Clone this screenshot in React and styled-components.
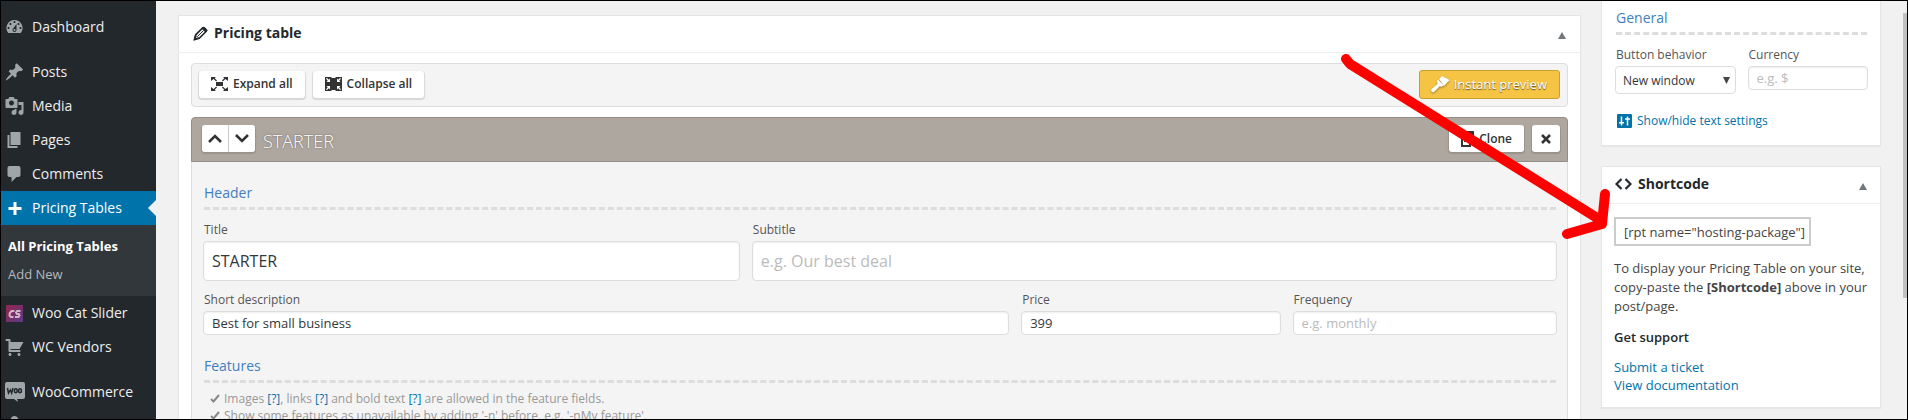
import { useState } from "react";
import styled, { createGlobalStyle } from "styled-components";

const GlobalStyle = createGlobalStyle`
  * {
    box-sizing: border-box;
  }

  body {
    margin: 0;
    background: #f1f1f1;
    color: #444;
    font-family: "Open Sans", "Noto Sans", sans-serif;
    font-size: 12px;
  }

  button, input, select {
    font-family: inherit;
    margin: 0;
  }

  a {
    color: #0073aa;
    text-decoration: none;
  }

  h1, h2, h3, h4, p, ul {
    margin: 0;
    padding: 0;
    font-weight: normal;
  }

  ul {
    list-style: none;
  }
`

const Screen = styled.div`
  position: relative;
  height: 100vh;
  overflow: hidden;
  display: flex;
  border: 1px solid #000;
`

const Sidebar = styled.nav`
  width: 155px;
  flex: none;
  padding-top: 9px;
  background: #23282d;
`

const MenuItem = styled.li`
  margin-top: ${(props) => (props.$gap ? "11px" : "0")};
`

const MenuLink = styled.a`
  height: 34px;
  padding-left: 3px;
  display: flex;
  align-items: center;
  gap: 7px;
  justify-content: flex-start;
  font-size: 14px;
  line-height: 20px;
  color: ${(props) => (props.$current ? "#fff" : "#eee")};
  background: ${(props) => (props.$current ? "#0073aa" : "transparent")};
  white-space: nowrap;

  svg {
    flex: none;
    color: ${(props) => (props.$current ? "#fff" : "#a0a5aa")};
  }

  &::after {
    content: "";
    display: ${(props) => (props.$current ? "block" : "none")};
    margin-left: auto;
    border: 8px solid transparent;
    border-left-width: 0;
    border-right-color: #f1f1f1;
  }
`

const SubMenu = styled.ul`
  height: 71px;
  padding: 7px;
  background: #32373c;
`

const SubLink = styled.a`
  display: block;
  height: 28px;
  font-size: 13px;
  line-height: 28px;
  font-weight: ${(props) => (props.$current ? 700 : 400)};
  color: ${(props) => (props.$current ? "#fff" : "#b4b9be")};
  white-space: nowrap;
`

const Content = styled.main`
  flex: 1;
  min-width: 0;
  padding-left: 22px;
  padding-right: 22px;
  display: flex;
  gap: 20px;
  align-items: flex-start;
`

const MainColumn = styled.div`
  flex: 1;
  min-width: 0;
  padding-top: 14px;
`

const SideColumn = styled.div`
  width: 280px;
  flex: none;
  display: flex;
  flex-direction: column;
  gap: 20px;
`

const Panel = styled.section`
  background: #fff;
  border: 1px solid #e5e5e5;
  border-top-width: ${(props) => (props.$cut ? "0" : "1px")};
  box-shadow: 0 1px 1px rgba(0, 0, 0, 0.04);
`

const PanelHead = styled.header`
  height: 37px;
  padding: 0 ${(props) => (props.$side ? "13px" : "14px")} 2px;
  display: flex;
  align-items: center;
  gap: 6px;
  border-bottom: 1px solid #eee;
  color: #23282d;

  h2 {
    flex: 1;
    font-size: 14px;
    line-height: 20px;
    font-weight: 700;
  }
`

const Toggle = styled.button`
  padding: 4px 0 0;
  border: 0;
  background: none;
  color: #72777c;
  display: flex;
`

const PanelBody = styled.div`
  padding: 10px 12px 0;
`

const Toolbar = styled.div`
  height: 44px;
  padding: 0 7px 2px;
  display: flex;
  align-items: center;
  gap: 8px;
  border: 1px solid #ddd;
  border-radius: 4px;
  background: #f4f4f4;
`

const Button = styled.button`
  height: 27px;
  padding: 0 ${(props) => (props.$icon ? "9px" : "12px")};
  display: flex;
  align-items: center;
  gap: 5px;
  border: 0;
  border-radius: 3px;
  background: #fff;
  box-shadow: 0 1px 1px 1px rgba(0, 0, 0, 0.12);
  color: #333;
  font-size: 12px;
  line-height: 18px;
  font-weight: 600;
  white-space: nowrap;
`

const PreviewButton = styled(Button)`
  height: 29px;
  margin-left: auto;
  padding: 0 12px 0 11px;
  gap: 4px;
  border: 1px solid #c69f2d;
  box-shadow: none;
  background: #f5c444;
  color: #fff;
  font-size: 13px;
  font-weight: 400;
  text-shadow: 0 1px 1px rgba(0, 0, 0, 0.6);

  svg {
    filter: drop-shadow(0 1px 1px rgba(0, 0, 0, 0.4));
  }
`

const PlanHead = styled.div`
  height: 45px;
  margin-top: 10px;
  padding: 7px 7px 0 10px;
  display: flex;
  align-items: flex-start;
  gap: 8px;
  border: 1px solid #938e87;
  border-radius: 4px 4px 0 0;
  background: #aea79f;

  h3 {
    flex: 1;
    padding-top: 4px;
    color: #fff;
    font-size: 18px;
    line-height: 24px;
    font-weight: 300;
    text-shadow: 0 0 2px rgba(0, 0, 0, 0.5);
  }
`

const MoveGroup = styled.div`
  display: flex;
  gap: 1px;
  border-radius: 3px;
  box-shadow: 0 1px 1px 1px rgba(0, 0, 0, 0.12);
  background: #ccc;

  button {
    width: 26px;
    padding: 0;
    justify-content: center;
    box-shadow: none;
  }

  button:first-child {
    border-radius: 3px 0 0 3px;
  }

  button:last-child {
    border-radius: 0 3px 3px 0;
  }
`

const PlanBody = styled.div`
  padding: 19px 10px 40px 11px;
  border: 1px solid #ddd;
  border-top: 0;
  background: #f4f4f4;
`

const SectionTitle = styled.h4`
  margin: 0 1px;
  height: 29px;
  border-bottom: 3px dashed #ddd;
  color: #427fbd;
  font-size: 14px;
  line-height: 24px;
`

const FieldRow = styled.div`
  display: grid;
  grid-template-columns: ${(props) => props.$columns};
  gap: 12px;
  margin-top: ${(props) => props.$top};
`

const Field = styled.div`
  min-width: 0;

  label {
    display: block;
    height: 19px;
    padding-left: 1px;
    color: #555;
    font-size: 12px;
    line-height: 16px;
    white-space: nowrap;
  }
`

const Input = styled.input`
  display: block;
  width: 100%;
  height: ${(props) => (props.$large ? "40px" : "24px")};
  padding: 0 8px;
  border: 1px solid #ddd;
  border-radius: 4px;
  background: #fff;
  box-shadow: inset 0 1px 2px rgba(0, 0, 0, 0.07);
  color: #32373c;
  font-size: ${(props) => (props.$large ? "16px" : "13px")};

  &::placeholder {
    color: #bbb;
    opacity: 1;
  }
`

const SelectBox = styled.div`
  display: grid;
  align-items: center;

  select, svg {
    grid-area: 1 / 1;
  }

  select {
    width: 100%;
    height: 28px;
    padding: 0 7px;
    appearance: none;
    border: 1px solid #ddd;
    border-radius: 4px;
    background: #fff;
    color: #32373c;
    font-size: 12px;
  }

  svg {
    justify-self: end;
    margin-right: 5px;
    pointer-events: none;
  }
`

const Notes = styled.ul`
  padding: 7px 0 0 7px;
  color: #999;
  font-size: 12px;
  line-height: 17px;

  li {
    display: flex;
    align-items: center;
    gap: 4px;
  }
`

const SettingsBody = styled.div`
  height: 144px;
  padding: 5px 12px 0 13px;
`

const SettingsLink = styled.a`
  margin: 18px 0 0 2px;
  display: flex;
  align-items: center;
  gap: 5px;
  font-size: 12px;
  line-height: 18px;
`

const ShortcodeBody = styled.div`
  height: 203px;
  padding: 13px 8px 0 12px;
  font-size: 13px;
  line-height: 19px;

  h3 {
    margin-top: 12px;
    color: #23282d;
    font-size: 13px;
    line-height: 18px;
    font-weight: 600;
  }
`

const CodeInput = styled.input`
  display: block;
  width: 197px;
  height: 29px;
  margin-bottom: 13px;
  padding: 0 2px 0 8px;
  border: 2px solid #ccc;
  background: #fff;
  color: #444;
  font-size: 13px;
`

const SupportLinks = styled.ul`
  margin-top: 12px;
  line-height: 18px;
`

const ScrollTrack = styled.div`
  width: 4px;
  flex: none;
  padding-top: 12px;
  background: #f1f1f1;
`

const ScrollThumb = styled.div`
  height: 285px;
  background: #c1c1c1;
`

// pointer drawn over the page, tied to the fixed-width side column
const Arrow = styled.svg`
  position: absolute;
  top: 49px;
  right: 291px;
  pointer-events: none;
`

const paths = {
  dashboard: "M3.76 16h12.48A7.998 7.998 0 0 0 10 3a7.998 7.998 0 0 0-6.24 13zM10 4c.55 0 1 .45 1 1s-.45 1-1 1-1-.45-1-1 .45-1 1-1zM6 6c.55 0 1 .45 1 1s-.45 1-1 1-1-.45-1-1 .45-1 1-1zm8 0c.55 0 1 .45 1 1s-.45 1-1 1-1-.45-1-1 .45-1 1-1zm-5.37 5.55L12 7v6c0 1.1-.9 2-2 2s-2-.9-2-2c0-.57.24-1.08.63-1.45zM4 10c.55 0 1 .45 1 1s-.45 1-1 1-1-.45-1-1 .45-1 1-1zm12 0c.55 0 1 .45 1 1s-.45 1-1 1-1-.45-1-1 .45-1 1-1zm-5 3c0-.55-.45-1-1-1s-1 .45-1 1 .45 1 1 1 1-.45 1-1z",
  pin: "M10.44 3.02l1.82-1.82 6.36 6.35-1.83 1.82c-1.05-.68-2.48-.57-3.41.36l-.75.75c-.92.93-1.04 2.35-.35 3.41l-1.83 1.82-2.41-2.41-2.8 2.79c-.42.42-3.38 2.71-3.8 2.29s1.86-3.39 2.28-3.81l2.79-2.79L4.1 9.36l1.83-1.82c1.05.69 2.48.57 3.4-.36l.75-.75c.93-.92 1.05-2.35.36-3.41z",
  media: "M13 11V4c0-.55-.45-1-1-1h-1.67L9 1H5L3.67 3H2c-.55 0-1 .45-1 1v7c0 .55.45 1 1 1h10c.55 0 1-.45 1-1zM7 4.5c1.38 0 2.5 1.12 2.5 2.5S8.38 9.5 7 9.5 4.5 8.38 4.5 7 5.62 4.5 7 4.5zM14 6h5v10.5c0 1.38-1.12 2.5-2.5 2.5S14 17.88 14 16.5s1.12-2.5 2.5-2.5c.17 0 .34.02.5.05V9h-3V6zm-4 8.05V13h2v3.5c0 1.38-1.12 2.5-2.5 2.5S7 17.88 7 16.5 8.12 14 9.5 14c.17 0 .34.02.5.05z",
  page: "M6 15V2h10v13H6zm-1 1h8v2H3V5h2v11z",
  comment: "M5 2h9c1.1 0 2 .9 2 2v7c0 1.1-.9 2-2 2h-2l-5 5v-5H5c-1.1 0-2-.9-2-2V4c0-1.1.9-2 2-2z",
  plus: "M17 9v3h-5v5H9v-5H4V9h5V4h3v5h5z",
  cart: "M6 13h9c.55 0 1 .45 1 1s-.45 1-1 1H5c-.55 0-1-.45-1-1V4H2c-.55 0-1-.45-1-1s.45-1 1-1h3c.55 0 1 .45 1 1v2h13l-4 7H6v1zm-.5 3c.83 0 1.5.67 1.5 1.5S6.33 19 5.5 19 4 18.33 4 17.5 4.67 16 5.5 16zm9 0c.83 0 1.5.67 1.5 1.5s-.67 1.5-1.5 1.5-1.5-.67-1.5-1.5.67-1.5 1.5-1.5z",
  box: "M10 0c2.2 0 3.6 1.6 3.8 3.6L18 6v11H2V6l4.2-2.4C6.4 1.6 7.8 0 10 0z",
}

const Dashicon = ({ name }) => (
  <svg width="21" height="20" viewBox="0 0 20 20" fill="currentColor" aria-hidden="true">
    <path fillRule="evenodd" d={paths[name]} />
  </svg>
)

const SliderIcon = () => (
  <svg width="21" height="20" viewBox="0 0 21 20" aria-hidden="true">
    <defs>
      <linearGradient id="cs" x1="0" y1="0" x2="1" y2="1">
        <stop offset="0" stopColor="#96264f" />
        <stop offset="1" stopColor="#5a3a86" />
      </linearGradient>
    </defs>
    <rect x="2" y="2" width="17" height="17" fill="url(#cs)" />
    <g fill="none" stroke="#d0b6c8" strokeWidth="2">
      <path d="M10.500 8H7.600L5.800 10l-.3 2.500L6.800 14H9.500" />
      <path d="M16.500 8h-3.400l-1 1.500.8 1.400h2l.6 1.500-1 1.600H11" />
    </g>
  </svg>
)

const WooIcon = () => (
  <svg width="21" height="20" viewBox="0 0 21 20" aria-hidden="true">
    <path fill="#a0a5aa" d="M3 0h16a2 2 0 0 1 2 2v13a2 2 0 0 1-2 2h-6l1 3-4-3H3a2 2 0 0 1-2-2V2a2 2 0 0 1 2-2z" />
    <g fill="none" stroke="#23282d" strokeWidth="1.500">
      <path d="M3.500 6l1 5 2-3 1.200 3L9 6" />
      <ellipse cx="11.800" cy="8.800" rx="1.400" ry="2" />
      <ellipse cx="16" cy="8.800" rx="1.400" ry="2" />
    </g>
  </svg>
)

const PencilIcon = () => (
  <svg width="15" height="15" viewBox="0 0 15 15" fill="none" stroke="#23282d" aria-hidden="true">
    <path strokeWidth="1.700" d="M1.500 13.500l1.200-4.700L9.500 2a1.500 1.500 0 0 1 2 0L13 3.500a1.500 1.500 0 0 1 0 2L6.200 12.300z" />
    <path strokeWidth="1" d="M4.500 10.500l6-6M3 9.500l2.500 2.500" />
    <path fill="#23282d" d="M9 2.500L10.500 1 14 4.500 12.500 6zM1.200 13.800l.8-3 2.200 2.200z" />
  </svg>
)

const ExpandIcon = () => (
  <svg width="17" height="14" viewBox="0 0 17 14" fill="#333" aria-hidden="true">
    <rect x="5" y="5" width="7" height="4" />
    <path d="M0 0h5L3.700 1.300l2.300 2.300-.8.800-2.600-2.300L0 4zM17 0h-5l1.300 1.300-2.300 2.300.8.800 2.600-2.300L17 4zM0 14h5l-1.300-1.300 2.300-2.300-.8-.8-2.600 2.300L0 10zM17 14h-5l1.300-1.300-2.300-2.300.8-.8 2.600 2.300L17 10z" />
  </svg>
)

const CollapseIcon = () => (
  <svg width="17" height="14" viewBox="0 0 17 14" aria-hidden="true">
    <rect width="17" height="14" fill="#333" />
    <path fill="#fff" d="M1 1.500L2 1l1.800 1.800L5 1.500V5H1.500l1.200-1.200zM16 1.500L15 1l-1.800 1.800L12 1.500V5h3.500l-1.200-1.200zM1 12.500l1 .5 1.800-1.800L5 12.500V9H1.500l1.200 1.200zM16 12.500l-1 .5-1.800-1.800-1.200 1.300V9h3.500l-1.200 1.200zM6.500 0h4v1h-4zM6.500 13h4v1h-4z" />
  </svg>
)

const BrushIcon = () => (
  <svg width="19" height="17" viewBox="0 0 19 17" fill="#fff" aria-hidden="true">
    <path d="M8 3l3-3 7.500 4-5.500 6zM7 3.500L12.500 9.500l-2 1.200-1.700-.5L3.500 15.500a1.800 1.800 0 0 1-2.800-2.500L6.500 8 6 5z" />
  </svg>
)

const CloneIcon = () => (
  <svg width="13" height="16" viewBox="0 0 13 16" aria-hidden="true">
    <path fill="#333" d="M3 0h10v11H3z" />
    <path fill="none" stroke="#333" strokeWidth="2" d="M1 4v11h8v-3" />
  </svg>
)

const SlidersIcon = () => (
  <svg width="15" height="14" viewBox="0 0 15 14" aria-hidden="true">
    <rect width="15" height="14" rx="1" fill="#0073aa" />
    <path fill="none" stroke="#fff" strokeWidth="1.500" d="M4.500 2.500v9M2 8.800h5M10.500 11.500v-9M8 5h5" />
  </svg>
)

const CodeIcon = () => (
  <svg width="17" height="12" viewBox="0 0 17 12" fill="none" stroke="#23282d" strokeWidth="2.200" aria-hidden="true">
    <path d="M6.500 1l-5 5 5 5M10.500 1l5 5-5 5" />
  </svg>
)

const Triangle = ({ down }) => (
  <svg width="8" height="7" viewBox="0 0 8 7" fill="currentColor" aria-hidden="true">
    <path d={down ? "M0 0h7L3.500 7z" : "M0 7h8L4 0z"} />
  </svg>
)

const CheckIcon = () => (
  <svg width="10" height="9" viewBox="0 0 10 9" fill="none" stroke="#888" strokeWidth="2" aria-hidden="true">
    <path d="M1 5l2.500 2.500L9 1" />
  </svg>
)

const Stroke = ({ d, width = 14, height = 9 }) => (
  <svg width={width} height={height} viewBox={`0 0 ${width} ${height}`} fill="none" stroke="#333" strokeWidth="2.500" aria-hidden="true">
    <path d={d} />
  </svg>
)

const Help = () => <a href="#help">[?]</a>

const TextField = ({ id, label, value = "", placeholder, large }) => {
  const [text, setText] = useState(value)

  return (
    <Field>
      <label htmlFor={id}>{label}</label>
      <Input
        id={id}
        $large={large}
        value={text}
        placeholder={placeholder}
        onChange={(e) => setText(e.target.value)}
      />
    </Field>
  )
}

const menu = [
  { label: "Dashboard", icon: <Dashicon name="dashboard" /> },
  { label: "Posts", icon: <Dashicon name="pin" />, gap: true },
  { label: "Media", icon: <Dashicon name="media" /> },
  { label: "Pages", icon: <Dashicon name="page" /> },
  { label: "Comments", icon: <Dashicon name="comment" /> },
  { label: "Pricing Tables", icon: <Dashicon name="plus" />, current: true, sub: ["All Pricing Tables", "Add New"] },
  { label: "Woo Cat Slider", icon: <SliderIcon /> },
  { label: "WC Vendors", icon: <Dashicon name="cart" /> },
  { label: "WooCommerce", icon: <WooIcon />, gap: true },
  { label: "", icon: <Dashicon name="box" /> },
]

const App = () => {
  const [behavior, setBehavior] = useState("new")

  return (
    <>
      <GlobalStyle />
      <Screen>
        <Sidebar>
          <ul>
            {menu.map((item) => (
              <MenuItem key={item.label} $gap={item.gap}>
                <MenuLink href="#menu" $current={item.current}>
                  {item.icon}
                  {item.label}
                </MenuLink>
                {item.sub && (
                  <SubMenu>
                    {item.sub.map((sub, i) => (
                      <li key={sub}>
                        <SubLink href="#submenu" $current={i === 0}>{sub}</SubLink>
                      </li>
                    ))}
                  </SubMenu>
                )}
              </MenuItem>
            ))}
          </ul>
        </Sidebar>

        <Content>
          <MainColumn>
            <Panel>
              <PanelHead>
                <PencilIcon />
                <h2>Pricing table</h2>
                <Toggle aria-label="Toggle pricing table"><Triangle /></Toggle>
              </PanelHead>
              <PanelBody>
                <Toolbar>
                  <Button><ExpandIcon />Expand all</Button>
                  <Button><CollapseIcon />Collapse all</Button>
                  <PreviewButton><BrushIcon />Instant preview</PreviewButton>
                </Toolbar>

                <PlanHead>
                  <MoveGroup>
                    <Button aria-label="Move up"><Stroke d="M1 8l6-6 6 6" /></Button>
                    <Button aria-label="Move down"><Stroke d="M1 1l6 6 6-6" /></Button>
                  </MoveGroup>
                  <h3>STARTER</h3>
                  <Button><CloneIcon />Clone</Button>
                  <Button $icon aria-label="Delete"><Stroke width={10} height={10} d="M1 1l8 8M9 1L1 9" /></Button>
                </PlanHead>

                <PlanBody>
                  <SectionTitle>Header</SectionTitle>
                  <FieldRow $columns="2fr 3fr" $top="12px">
                    <TextField id="title" label="Title" value="STARTER" large />
                    <TextField id="subtitle" label="Subtitle" placeholder="e.g. Our best deal" large />
                  </FieldRow>
                  <FieldRow $columns="808fr 260fr 265fr" $top="11px">
                    <TextField id="description" label="Short description" value="Best for small business" />
                    <TextField id="price" label="Price" value="399" />
                    <TextField id="frequency" label="Frequency" placeholder="e.g. monthly" />
                  </FieldRow>
                  <FieldRow $columns="1fr" $top="19px">
                    <SectionTitle>Features</SectionTitle>
                  </FieldRow>
                  <Notes>
                    <li>
                      <CheckIcon />
                      <span>Images <Help />, links <Help /> and bold text <Help /> are allowed in the feature fields.</span>
                    </li>
                    <li>
                      <CheckIcon />
                      <span>Show some features as unavailable by adding '-n' before, e.g. '-nMy feature'.</span>
                    </li>
                  </Notes>
                </PlanBody>
              </PanelBody>
            </Panel>
          </MainColumn>

          <SideColumn>
            <Panel $cut>
              <SettingsBody>
                <SectionTitle>General</SectionTitle>
                <FieldRow $columns="1fr 1fr" $top="12px">
                  <Field>
                    <label htmlFor="behavior">Button behavior</label>
                    <SelectBox>
                      <select id="behavior" value={behavior} onChange={(e) => setBehavior(e.target.value)}>
                        <option value="new">New window</option>
                        <option value="same">Same window</option>
                      </select>
                      <Triangle down />
                    </SelectBox>
                  </Field>
                  <TextField id="currency" label="Currency" placeholder="e.g. $" />
                </FieldRow>
                <SettingsLink href="#settings"><SlidersIcon />Show/hide text settings</SettingsLink>
              </SettingsBody>
            </Panel>

            <Panel>
              <PanelHead $side>
                <CodeIcon />
                <h2>Shortcode</h2>
                <Toggle aria-label="Toggle shortcode"><Triangle /></Toggle>
              </PanelHead>
              <ShortcodeBody>
                <CodeInput aria-label="Shortcode" readOnly value={'[rpt name="hosting-package"]'} />
                <p>
                  To display your Pricing Table on your site, copy-paste the <b>[Shortcode]</b> above in your post/page.
                </p>
                <h3>Get support</h3>
                <SupportLinks>
                  <li><a href="#ticket">Submit a ticket</a></li>
                  <li><a href="#docs">View documentation</a></li>
                </SupportLinks>
              </ShortcodeBody>
            </Panel>
          </SideColumn>
        </Content>

        <ScrollTrack>
          <ScrollThumb />
        </ScrollTrack>

        <Arrow width="276" height="200" viewBox="1340 50 276 200" fill="none" stroke="#f00" strokeWidth="10" strokeLinecap="round" strokeLinejoin="round" aria-hidden="true">
          <path d="M1346 59l4 5 252 157M1605 194l-3 30-35 10" />
        </Arrow>
      </Screen>
    </>
  )
}

export default App;
